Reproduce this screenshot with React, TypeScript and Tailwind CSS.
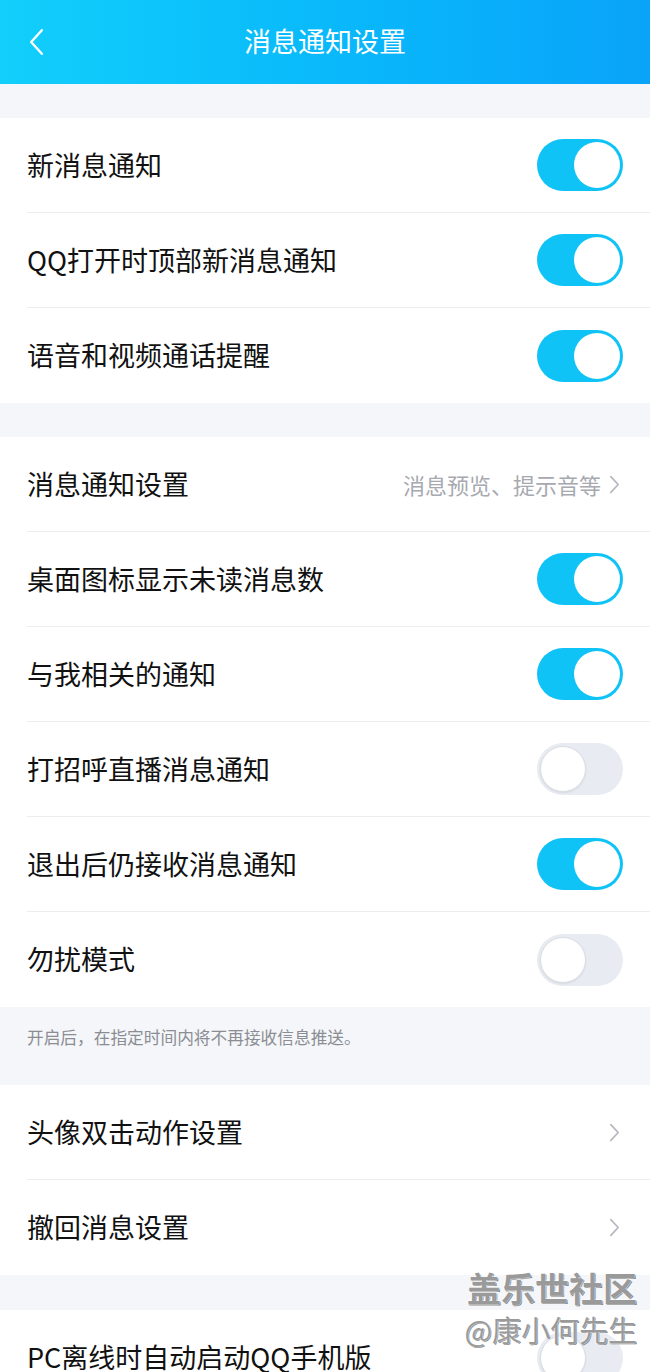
import React from 'react';

type Row =
  | { label: string; kind: 'toggle'; on: boolean }
  | { label: string; kind: 'link'; hint?: string };

const sectionA: Row[] = [
  { label: '新消息通知', kind: 'toggle', on: true },
  { label: 'QQ打开时顶部新消息通知', kind: 'toggle', on: true },
  { label: '语音和视频通话提醒', kind: 'toggle', on: true },
];

const sectionB: Row[] = [
  { label: '消息通知设置', kind: 'link', hint: '消息预览、提示音等' },
  { label: '桌面图标显示未读消息数', kind: 'toggle', on: true },
  { label: '与我相关的通知', kind: 'toggle', on: true },
  { label: '打招呼直播消息通知', kind: 'toggle', on: false },
  { label: '退出后仍接收消息通知', kind: 'toggle', on: true },
  { label: '勿扰模式', kind: 'toggle', on: false },
];

const sectionC: Row[] = [
  { label: '头像双击动作设置', kind: 'link' },
  { label: '撤回消息设置', kind: 'link' },
];

const sectionD: Row[] = [{ label: 'PC离线时自动启动QQ手机版', kind: 'toggle', on: false }];

function Toggle({ on }: { on: boolean }) {
  return (
    <div
      className={
        on
          ? 'w-[86px] h-[52px] rounded-full bg-[#0fc3f6] p-[3px] flex justify-end'
          : 'w-[86px] h-[52px] rounded-full bg-[#e9ebf3] p-[3px] flex justify-start'
      }
    >
      <div
        className={
          on
            ? 'w-[46px] h-[46px] rounded-full bg-white'
            : 'w-[46px] h-[46px] rounded-full bg-white border border-[#dcdde3] shadow-[0_1px_2px_rgba(0,0,0,0.08)]'
        }
      />
    </div>
  );
}

function Chevron({ className }: { className: string }) {
  return (
    <svg viewBox="0 0 10 18" className={className} fill="none" stroke="currentColor" strokeWidth="1.6" strokeLinecap="round" strokeLinejoin="round">
      <path d="M1.5 1.5 L8.5 9 L1.5 16.5" />
    </svg>
  );
}

function Section({ rows }: { rows: Row[] }) {
  return (
    <div className="bg-white">
      {rows.map((r, i) => (
        <div key={r.label} className="pl-[27px]">
          <div
            className={
              i < rows.length - 1
                ? 'h-[95px] flex items-center justify-between pr-[27px] border-b border-[#ededf0]'
                : 'h-[95px] flex items-center justify-between pr-[27px]'
            }
          >
            <span className="text-[27px] text-[#111] whitespace-nowrap">{r.label}</span>
            {r.kind === 'toggle' ? (
              <Toggle on={r.on} />
            ) : (
              <div className="flex items-center gap-[8px] text-[#b6b8bf]">
                {r.hint && <span className="text-[22px] text-[#a7a9b0]">{r.hint}</span>}
                <Chevron className="w-[11px] h-[19px] mr-[3px]" />
              </div>
            )}
          </div>
        </div>
      ))}
    </div>
  );
}

export default function App() {
  return (
    <div
      className="relative w-[650px] h-[1372px] overflow-hidden bg-[#f4f6f9]"
      style={{ fontFamily: '"Noto Sans CJK SC", "Noto Sans", sans-serif' }}
    >
      <header className="h-[84px] bg-gradient-to-r from-[#12cffb] to-[#0aa3f9] flex items-center relative">
        <div className="w-[80px] pl-[29px] flex items-center">
          <svg viewBox="0 0 14 26" className="w-[15px] h-[28px]" fill="none" stroke="white" strokeWidth="2.2" strokeLinecap="round" strokeLinejoin="round">
            <path d="M12 2 L2 13 L12 24" />
          </svg>
        </div>
        <h1 className="flex-1 text-center text-white text-[27px] pr-[80px] pb-[2px]">消息通知设置</h1>
      </header>

      <div className="h-[34px]" />
      <Section rows={sectionA} />
      <div className="h-[34px]" />
      <Section rows={sectionB} />
      <div className="h-[78px] pl-[27px] pt-[18px] text-[16.7px] text-[#8b8d93]">开启后，在指定时间内将不再接收信息推送。</div>
      <Section rows={sectionC} />
      <div className="h-[35px]" />
      <Section rows={sectionD} />

      <div className="absolute right-[13px] top-[1271px] flex flex-col items-end leading-none text-[#9a9a9a] [text-shadow:0_0_2px_#fff,0_0_2px_#fff,1px_1px_0_#666]">
        <span className="text-[34px] font-bold">盖乐世社区</span>
        <span className="text-[29px] mt-[10px]">@康小何先生</span>
      </div>
    </div>
  );
}
